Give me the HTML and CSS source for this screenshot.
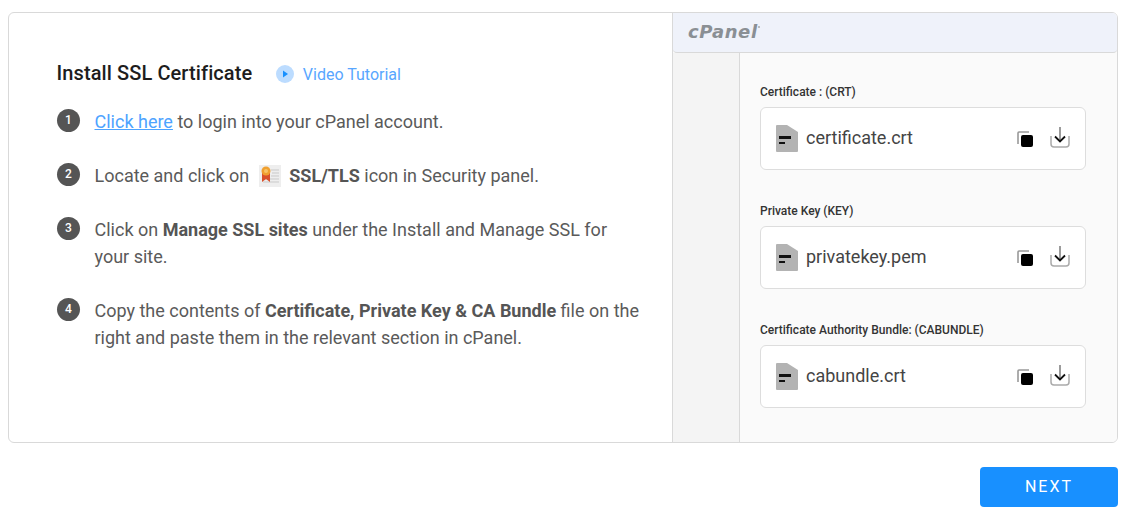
FILE: index.html
```html
<!DOCTYPE html>
<html lang="en">
<head>
<meta charset="utf-8">
<title>Install SSL Certificate</title>
<link rel="stylesheet" href="styles.css">
</head>
<body>
<main class="page">
  <section class="card">
    <div class="guide">
      <div class="heading">
        <h1>Install SSL Certificate</h1>
        <a class="video" href="#">
          <svg class="play" viewBox="0 0 18 18" width="18" height="18"><circle cx="9" cy="9" r="9" fill="#bcdcff"/><path d="M7 5.500v7l5-3.500z" fill="#1890ff"/></svg>
          Video Tutorial
        </a>
      </div>
      <ol class="steps">
        <li class="step"><span class="num">1</span><p><a href="#">Click here</a> to login into your cPanel account.</p></li>
        <li class="step"><span class="num">2</span><p>Locate and click on
          <svg class="ssl" viewBox="0 0 22 22" width="22" height="22"><rect width="22" height="22" fill="#eeeeee"/><path d="M12 5h8M13 8h7M12 11h8M4 14h16M4 17h16" stroke="#c9c9c9" stroke-width="1"/><path d="M3 8h8v9l-4-3-4 3z" fill="#d9512c"/><circle cx="7" cy="6" r="4.500" fill="#f0a030"/><circle cx="7" cy="6" r="2" fill="#f7c468"/></svg>
          <b>SSL/TLS</b> icon in Security panel.</p></li>
        <li class="step"><span class="num">3</span><p>Click on <b>Manage SSL sites</b> under the Install and Manage SSL for your site.</p></li>
        <li class="step"><span class="num">4</span><p>Copy the contents of <b>Certificate, Private Key &amp; CA Bundle</b> file on the right and paste them in the relevant section in cPanel.</p></li>
      </ol>
    </div>
    <div class="preview">
      <header class="topbar"><span class="logo">cPanel</span><span class="tm"></span></header>
      <div class="panes">
        <div class="side"></div>
        <div class="files">
          <div class="group">
            <div class="label">Certificate : (CRT)</div>
            <div class="file">
              <svg class="doc" viewBox="0 0 22 27" width="22" height="27"><path d="M1 0h10l11 7v19a1 1 0 0 1-1 1H1a1 1 0 0 1-1-1V1a1 1 0 0 1 1-1z" fill="#b3b3b3"/><path d="M3 11h12v3H3zM3 17h6v2H3z" fill="#111"/></svg>
              <span class="name">certificate.crt</span>
              <svg class="copy" viewBox="0 0 17 17" width="17" height="17"><path d="M1 13V2a1 1 0 0 1 1-1h10" fill="none" stroke="#999" stroke-width="1.600"/><rect x="4" y="4" width="12" height="12" rx="2" fill="#000"/></svg>
              <svg class="save" viewBox="0 0 20 21" width="20" height="21"><path d="M1 9v8a3 3 0 0 0 3 3h12a3 3 0 0 0 3-3V9" fill="none" stroke="#aaa" stroke-width="1.500"/><path d="M10 0v14" fill="none" stroke="#666" stroke-width="1.300"/><path d="M5 9.500l5 5 5-5" fill="none" stroke="#111" stroke-width="1.800"/></svg>
            </div>
          </div>
          <div class="group">
            <div class="label">Private Key (KEY)</div>
            <div class="file">
              <svg class="doc" viewBox="0 0 22 27" width="22" height="27"><path d="M1 0h10l11 7v19a1 1 0 0 1-1 1H1a1 1 0 0 1-1-1V1a1 1 0 0 1 1-1z" fill="#b3b3b3"/><path d="M3 11h12v3H3zM3 17h6v2H3z" fill="#111"/></svg>
              <span class="name">privatekey.pem</span>
              <svg class="copy" viewBox="0 0 17 17" width="17" height="17"><path d="M1 13V2a1 1 0 0 1 1-1h10" fill="none" stroke="#999" stroke-width="1.600"/><rect x="4" y="4" width="12" height="12" rx="2" fill="#000"/></svg>
              <svg class="save" viewBox="0 0 20 21" width="20" height="21"><path d="M1 9v8a3 3 0 0 0 3 3h12a3 3 0 0 0 3-3V9" fill="none" stroke="#aaa" stroke-width="1.500"/><path d="M10 0v14" fill="none" stroke="#666" stroke-width="1.300"/><path d="M5 9.500l5 5 5-5" fill="none" stroke="#111" stroke-width="1.800"/></svg>
            </div>
          </div>
          <div class="group">
            <div class="label">Certificate Authority Bundle: (CABUNDLE)</div>
            <div class="file">
              <svg class="doc" viewBox="0 0 22 27" width="22" height="27"><path d="M1 0h10l11 7v19a1 1 0 0 1-1 1H1a1 1 0 0 1-1-1V1a1 1 0 0 1 1-1z" fill="#b3b3b3"/><path d="M3 11h12v3H3zM3 17h6v2H3z" fill="#111"/></svg>
              <span class="name">cabundle.crt</span>
              <svg class="copy" viewBox="0 0 17 17" width="17" height="17"><path d="M1 13V2a1 1 0 0 1 1-1h10" fill="none" stroke="#999" stroke-width="1.600"/><rect x="4" y="4" width="12" height="12" rx="2" fill="#000"/></svg>
              <svg class="save" viewBox="0 0 20 21" width="20" height="21"><path d="M1 9v8a3 3 0 0 0 3 3h12a3 3 0 0 0 3-3V9" fill="none" stroke="#aaa" stroke-width="1.500"/><path d="M10 0v14" fill="none" stroke="#666" stroke-width="1.300"/><path d="M5 9.500l5 5 5-5" fill="none" stroke="#111" stroke-width="1.800"/></svg>
            </div>
          </div>
        </div>
      </div>
    </div>
  </section>
  <div class="actions"><button class="next" type="button">NEXT</button></div>
</main>
</body>
</html>
```
FILE: styles.css
```css
* { box-sizing: border-box; }
html, body { margin: 0; height: 100%; background: #fff; overflow: hidden; }
body { font-family: Roboto, "Liberation Sans", sans-serif; color: #555; }
.page { padding: 12px 18px 0 8px; }
.card {
  display: flex;
  height: 431px;
  border: 1px solid #d9d9d9;
  border-radius: 6px;
  overflow: hidden;
}
.guide { width: 663px; padding: 45px 32px 0 48px; }
.heading { display: flex; align-items: center; height: 30px; }
h1 { margin: 0 0 0 -0.5px; font-size: 20px; font-weight: 500; letter-spacing: 0.1px; line-height: 30px; color: #1d1d1d; }
.video {
  display: flex;
  align-items: center;
  gap: 9px;
  margin-left: 23.500px;
  margin-top: 2px;
  font-size: 16px;
  color: #58a6ff;
  text-decoration: none;
}
.steps { list-style: none; margin: 20px 0 0; padding: 0; display: flex; flex-direction: column; gap: 27px; }
.step { display: flex; gap: 15px; align-items: flex-start; }
.num {
  flex: none;
  width: 23px;
  height: 23px;
  margin-top: 1px;
  border-radius: 50%;
  background: #555;
  color: #fff;
  font-size: 12px;
  font-weight: 500;
  line-height: 22px;
  text-align: center;
}
.step p { margin: 0 0 0 -0.5px; font-size: 18px; line-height: 27px; color: #5a5a5a; }
.step p a { color: #4da3ff; }
.step b { font-weight: 700; color: #555; }
.ssl { vertical-align: -5px; margin: 0 4px 0 5px; }
.preview { flex: 1; min-width: 0; display: flex; flex-direction: column; border-left: 1px solid #d9d9d9; background: #fafafa; }
.topbar {
  height: 40px;
  flex: none;
  display: flex;
  align-items: center;
  padding: 0 0 2px 15px;
  background: #eff2fa;
  border-bottom: 1px solid #d9d9d9;
  border-radius: 0 0 4px 4px;
}
.logo {
  font-family: "DejaVu Sans", Lato, sans-serif;
  font-size: 18px;
  font-weight: 700;
  font-style: italic;
  letter-spacing: 0.6px;
  color: #8a8f94;
}
.tm {
  width: 2px;
  height: 2px;
  margin: 0 0 10px 0;
  border-radius: 50%;
  background: #aaa;
}
.panes { flex: 1; display: flex; }
.side { width: 67px; flex: none; background: #f4f4f4; border-right: 1px solid #d9d9d9; }
.files { flex: 1; padding: 31px 31px 0 20px; display: flex; flex-direction: column; gap: 33px; }
.label { font-size: 12px; font-weight: 500; line-height: 16px; color: #333; margin-bottom: 7px; }
.file {
  display: flex;
  align-items: center;
  height: 63px;
  padding: 0 15px 0 15px;
  background: #fff;
  border: 1px solid #ddd;
  border-radius: 6px;
}
.doc { flex: none; }
.name { flex: 1; margin-left: 8px; font-size: 18px; color: #444; margin-top: -2px; }
.copy { flex: none; margin-top: 1px; }
.save { flex: none; margin-left: 16px; margin-bottom: 2px; }
.actions { display: flex; justify-content: flex-end; margin-top: 24px; }
.next {
  width: 138px;
  height: 40px;
  padding: 0 0 2px;
  border: 0;
  border-radius: 4px;
  background: #1890ff;
  color: #fff;
  font-family: Roboto, "Liberation Sans", sans-serif;
  font-size: 16px;
  letter-spacing: 2px;
}
```
